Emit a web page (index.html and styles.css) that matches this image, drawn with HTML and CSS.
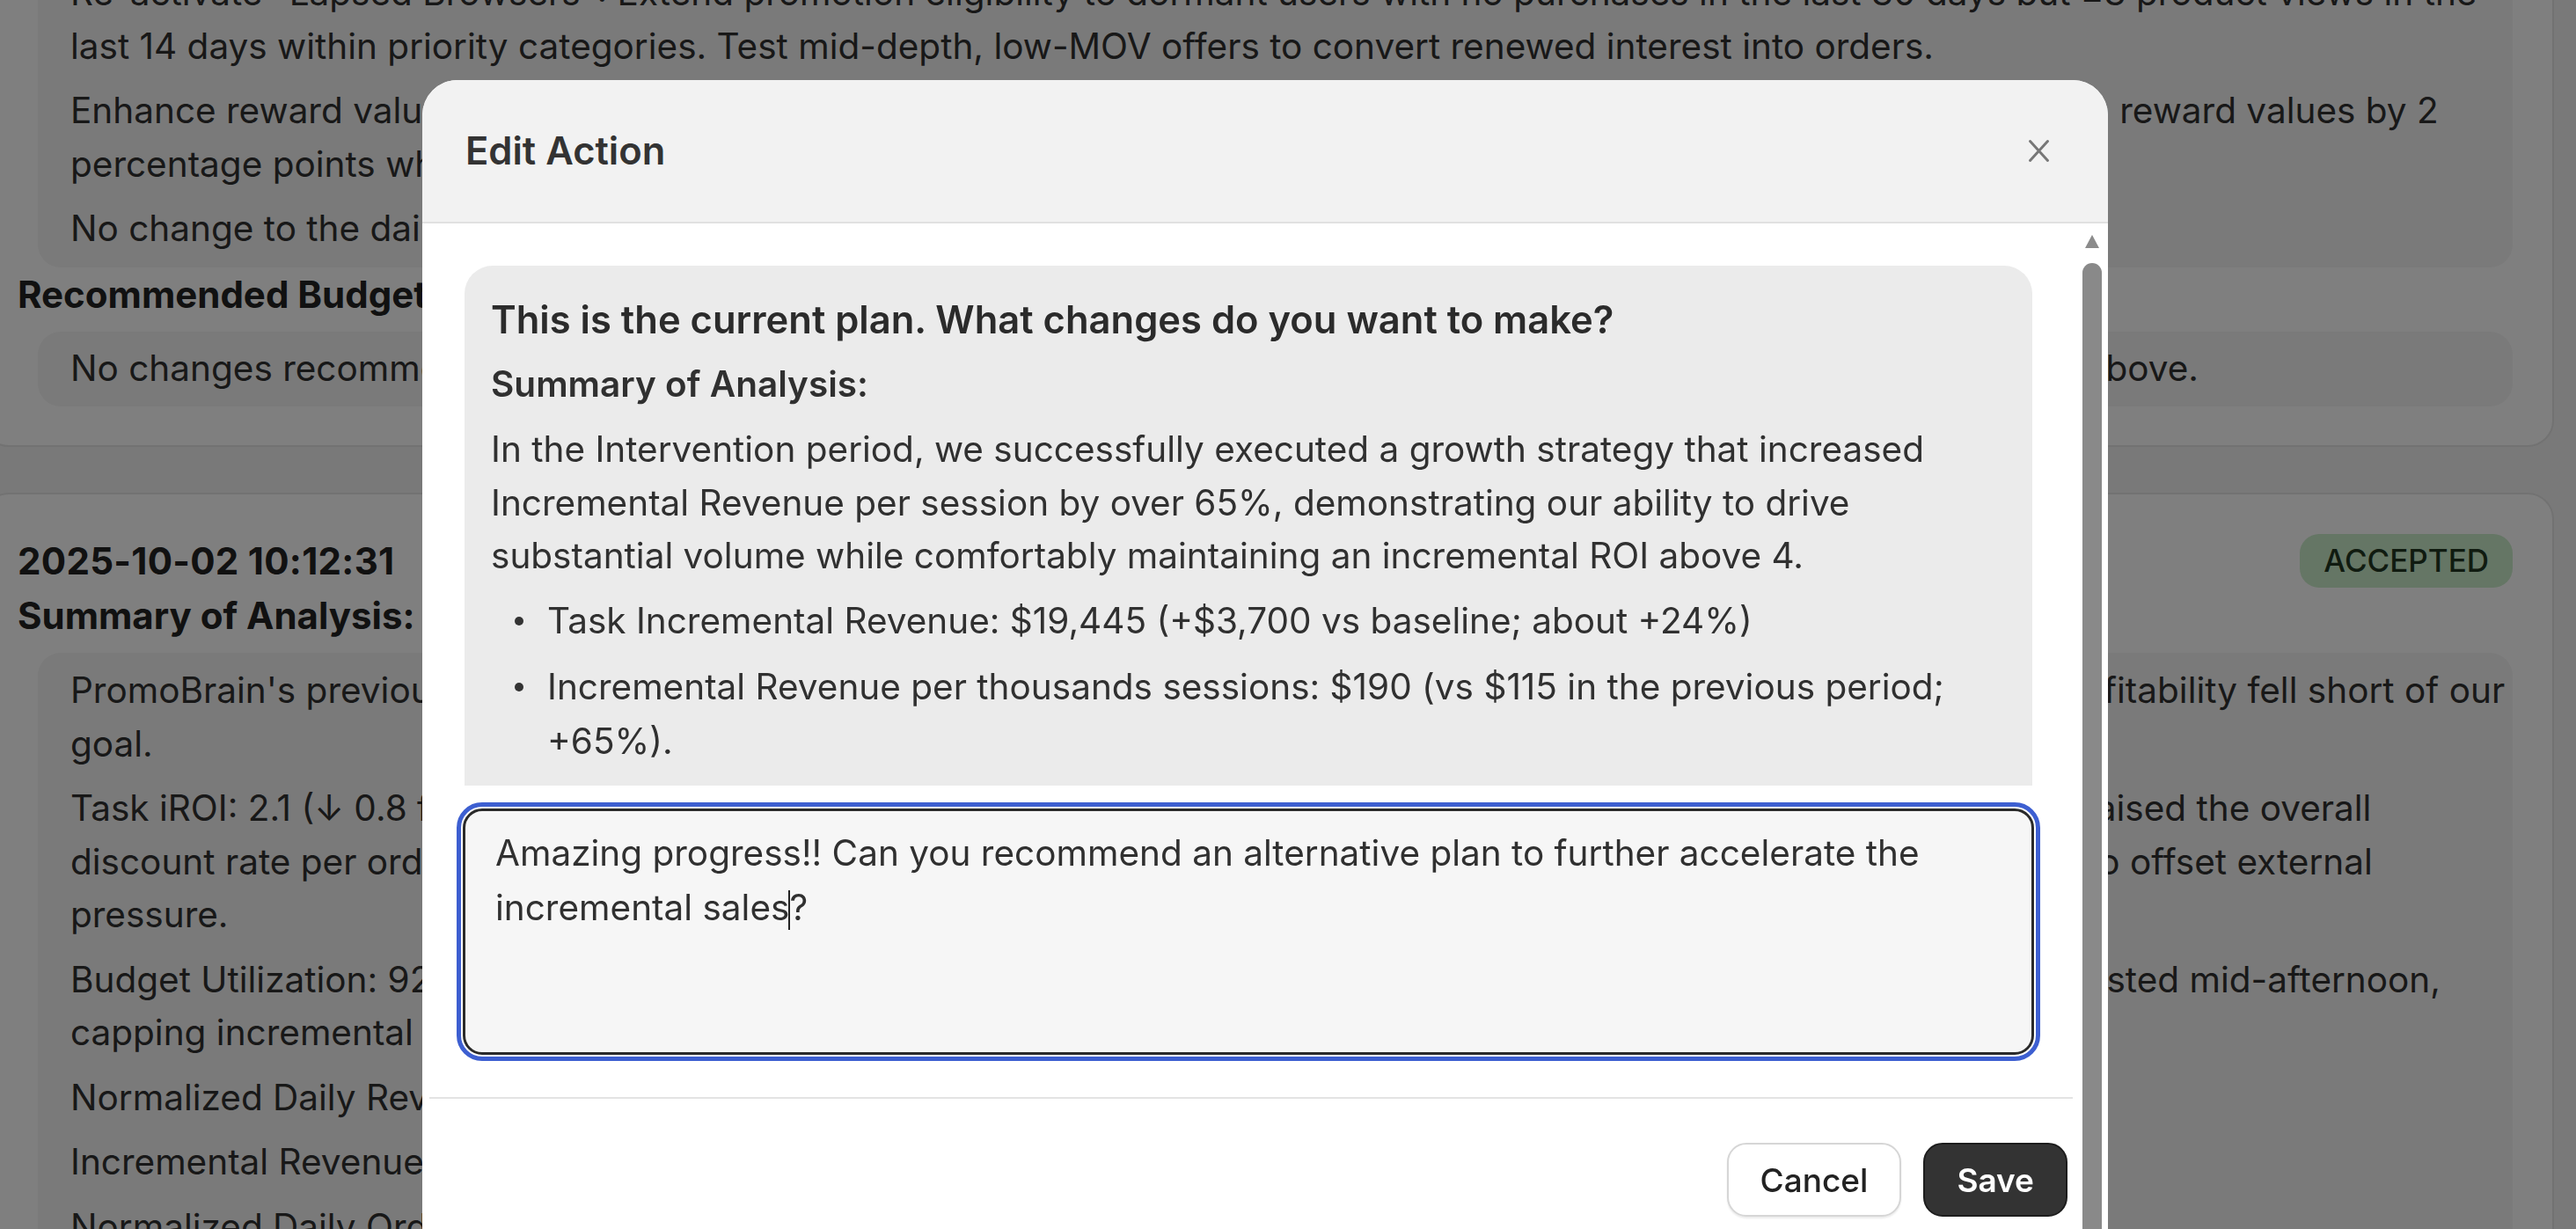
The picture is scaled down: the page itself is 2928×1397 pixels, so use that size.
FILE: index.html
```html
<!DOCTYPE html>
<html lang="en">
<head>
<meta charset="utf-8">
<title>Edit Action</title>
<link rel="stylesheet" href="styles.css">
</head>
<body>
<main class="page">
  <section class="card card-first">
    <div class="box">
      <p>Re-activate "Lapsed Browsers": Extend promotion eligibility to dormant users with no purchases in the last 30 days but ≥3 product views in the<br>last 14 days within priority categories. Test mid-depth, low-MOV offers to convert renewed interest into orders.</p>
      <p>Enhance reward value for loyal high-frequency shoppers: For members with 3+ orders in the last 60 days, add an uplift in reward values by 2<br>percentage points when their basket size exceeds the current average order value.</p>
      <p>No change to the daily budget cap: keep allocations steady while the new segments ramp up.</p>
    </div>
    <h3 class="section-title">Recommended Budget Changes:</h3>
    <div class="box">
      <p>No changes recommended to the daily budget at this time; continue with the current allocation and pacing rule outlined above.</p>
    </div>
  </section>
  <section class="card card-second">
    <div class="card-head">
      <h2 class="stamp">2025-10-02 10:12:31</h2>
      <span class="badge">ACCEPTED</span>
    </div>
    <h3 class="section-title">Summary of Analysis:</h3>
    <div class="box">
      <p>PromoBrain's previous plan drove steady gains in incremental revenue and volume across core segments, but overall profitability fell short of our<br>goal.</p>
      <p>Task iROI: 2.1 (↓ 0.8 from the prior period). Competitor promotions intensified across key categories this season, so we raised the overall<br>discount rate per order by roughly 1.5 percentage points to protect conversion rates on high-intent mobile sessions and to offset external<br>pressure.</p>
      <p>Budget Utilization: 92% (↑ 6 points vs the prior period). On high-traffic weekdays, the daily budget was frequently exhausted mid-afternoon,<br>capping incremental revenue during evening peak hours.</p>
      <p>Normalized Daily Revenue: $4,210 (↑ 12% vs baseline).</p>
      <p>Incremental Revenue per thousand sessions: $148.</p>
      <p>Normalized Daily Orders: 318 (↑ 9%).</p>
    </div>
  </section>
</main>

<div class="overlay"></div>

<div class="modal" role="dialog" aria-labelledby="modal-title">
  <header class="modal-header">
    <h2 class="modal-title" id="modal-title">Edit Action</h2>
    <button class="close" type="button" aria-label="Close">
      <svg viewBox="0 0 25 27" width="25" height="27"><path d="M2.5 2.5 L22.5 24.5 M22.5 2.5 L2.5 24.5" stroke="#777" stroke-width="3" stroke-linecap="round" fill="none"/></svg>
    </button>
  </header>
  <div class="modal-scroll">
    <div class="modal-content">
      <div class="plan">
        <h3 class="plan-title">This is the current plan. What changes do you want to make?</h3>
        <h4 class="plan-sub">Summary of Analysis:</h4>
        <p>In the Intervention period, we successfully executed a growth strategy that increased<br>Incremental Revenue per session by over 65%, demonstrating our ability to drive<br>substantial volume while comfortably maintaining an incremental ROI above 4.</p>
        <ul>
          <li><span>Task Incremental Revenue: $19,445 (+$3,700 vs baseline; about +24%)</span></li>
          <li><span>Incremental Revenue per thousands sessions: $190 (vs $115 in the previous period;<br>+65%).</span></li>
        </ul>
      </div>
      <div class="reply" role="textbox" aria-multiline="true">Amazing progress!! Can you recommend an alternative plan to further accelerate the<br>incremental sales<span class="caret"></span>?</div>
      <footer class="modal-footer">
        <button class="btn btn-cancel" type="button">Cancel</button>
        <button class="btn btn-save" type="button">Save</button>
      </footer>
    </div>
    <div class="scrollbar" aria-hidden="true">
      <span class="scroll-arrow"></span>
      <span class="scroll-thumb"></span>
    </div>
  </div>
</div>
</body>
</html>
```

FILE: styles.css
```css
* { box-sizing: border-box; }
html, body { margin: 0; padding: 0; }
body {
  width: 2928px;
  height: 1397px;
  overflow: hidden;
  background: #f3f3f3;
  font-family: "Inter", "Noto Sans", "Liberation Sans", sans-serif;
  color: #303030;
  font-size: 40.5px;
  line-height: 60.5px;
}

/* background page */
.page { margin-top: -70px; padding-right: 25px; }
.card {
  margin-left: -20px;
  background: #fff;
  border: 2px solid #e4e4e4;
  border-radius: 30px;
  padding: 18px 45px 44px 38px;
}
.card + .card { margin-top: 52px; padding-top: 45px; }
.box {
  margin-left: 23px;
  background: #f5f5f5;
  border-radius: 26px;
  padding: 12px 37px 13px;
  display: flex;
  flex-direction: column;
  gap: 13px;
}
.card-second .box { padding-top: 13px; }
.box p { margin: 0; white-space: nowrap; }
.section-title {
  margin: 0 0 12px;
  font-size: 42px;
  font-weight: 700;
  line-height: 61px;
  color: #222;
}
.card-head { display: flex; justify-content: space-between; align-items: center; }
.card-head + .section-title { margin-top: 1px; }
.stamp { margin: 0; font-size: 42px; font-weight: 700; letter-spacing: 0.3px; line-height: 61px; color: #222; }
.badge {
  height: 61px;
  padding: 0 27px;
  border-radius: 22px;
  background: #cbeccb;
  color: #213621;
  font-size: 35px;
  font-weight: 500;
  line-height: 1;
  display: flex;
  align-items: center;
}

/* overlay + modal */
.overlay { position: fixed; inset: 0; background: rgba(0, 0, 0, 0.5); }
.modal {
  position: fixed;
  left: 480px;
  top: 91px;
  width: 1916px;
  height: 1500px;
  background: #fff;
  border-radius: 40px;
  overflow: hidden;
  display: flex;
  flex-direction: column;
}
.modal-header {
  height: 163px;
  flex: none;
  background: #f2f2f2;
  border-bottom: 2px solid #e1e1e1;
  display: flex;
  align-items: center;
  justify-content: space-between;
  padding: 0 66px 0 49px;
}
.modal-title { margin: 0; font-size: 43.5px; font-weight: 600; line-height: 1; color: #333; }
.close { width: 25px; height: 27px; padding: 0; border: 0; background: none; display: block; }
.close svg { display: block; }

.modal-scroll { flex: 1; display: flex; min-height: 0; }
.modal-content { flex: 1; min-width: 0; padding: 48px 56px 0 48px; }
.scrollbar { width: 30px; flex: none; display: flex; flex-direction: column; padding-top: 13px; }
.scroll-arrow {
  width: 0; height: 0;
  margin-left: 4px;
  border-left: 8px solid transparent;
  border-right: 8px solid transparent;
  border-bottom: 15px solid #8b8b8b;
}
.scroll-thumb { flex: 1; width: 22px; margin: 17px 0 0 1px; background: #898989; border-radius: 11px; }

.plan {
  background: #ebebeb;
  border-radius: 32px 32px 0 0;
  padding: 30px 37px 19.5px 30px;
}
.plan-title { margin: 0; font-size: 43.5px; font-weight: 600; line-height: 62px; color: #2b2b2b; white-space: nowrap; }
.plan-sub { margin: 12px 0 0; font-size: 40.5px; font-weight: 600; line-height: 61px; color: #303030; }
.plan p { margin: 14px 0 0; white-space: nowrap; }
.plan ul { margin: 12px 0 0; padding: 0; list-style: none; line-height: 62px; }
.plan li { display: flex; white-space: nowrap; padding-left: 27px; }
.plan li + li { margin-top: 13px; }
.plan li::before {
  content: "";
  flex: none;
  width: 10px;
  height: 10px;
  border-radius: 50%;
  background: #333;
  margin: 26px 27px 0 0;
}

.reply {
  margin: 26px -2px 0;
  height: 280px;
  border: 3px solid #2a2a2a;
  border-radius: 22px;
  background: #f6f6f6;
  padding: 17px 34px;
  outline: 5px solid #3d5fd1;
  outline-offset: 2px;
  line-height: 62px;
  white-space: nowrap;
  color: #303030;
}
.caret { display: inline-block; width: 2px; height: 45px; background: #222; vertical-align: middle; margin: 0 -1px; }

.modal-footer {
  margin: 48px -46px 0 -40px;
  border-top: 2px solid #e3e3e3;
  padding: 50px 6px 0 0;
  display: flex;
  justify-content: flex-end;
  gap: 25px;
}
.btn {
  height: 84px;
  border-radius: 22px;
  font-family: inherit;
  font-size: 37px;
  line-height: 1;
  padding: 0 36px;
  cursor: pointer;
}
.btn-cancel { background: #fff; border: 2px solid #d6d6d6; color: #222; font-weight: 500; box-shadow: 0 2px 2px rgba(0, 0, 0, 0.08); }
.btn-save { background: #333; border: 2px solid #1d1d1d; color: #fff; font-weight: 600; }
```
